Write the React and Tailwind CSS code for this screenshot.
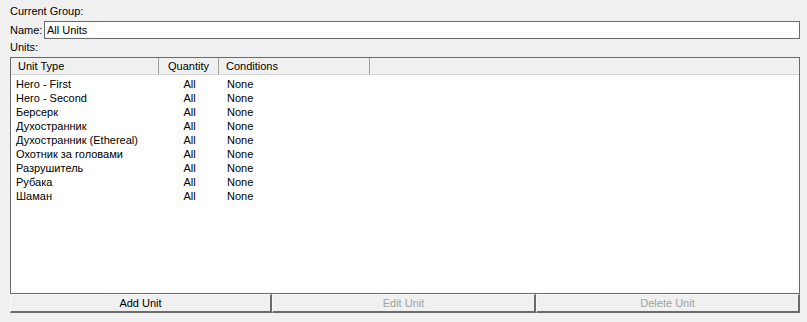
const units = [
  'Hero - First',
  'Hero - Second',
  'Берсерк',
  'Духостранник',
  'Духостранник (Ethereal)',
  'Охотник за головами',
  'Разрушитель',
  'Рубака',
  'Шаман',
];

export default function App() {
  return (
    <div className="w-[807px] h-[322px] bg-[#f0f0f0] text-black text-[11px] font-['Liberation_Sans',Arial,sans-serif] pl-[10px] pr-[7px] pt-[4px]">
      <div className="h-[14px] leading-[14px]">Current Group:</div>

      {/* Name row */}
      <div className="mt-[3px] h-[18px] flex items-center">
        <span className="w-[34px] leading-[14px]">Name:</span>
        <div className="flex-1 h-[18px] bg-white border border-[#6a6a6a] flex items-center px-[2px] leading-[14px]">
          All Units
        </div>
      </div>

      <div className="h-[15px] leading-[15px] mt-[1px]">Units:</div>

      {/* List view */}
      <div className="mt-[2px] h-[237px] bg-white border border-[#6a6a6a] flex flex-col">
        <div className="h-[17px] flex bg-[#f0f0f0] border-b border-[#d5d5d5] leading-[16px]">
          <div className="w-[148px] pl-[7px] border-r border-[#a0a0a0]">Unit Type</div>
          <div className="w-[60px] text-center border-r border-[#a0a0a0]">Quantity</div>
          <div className="w-[151px] pl-[7px] border-r border-[#a0a0a0]">Conditions</div>
          <div className="flex-1" />
        </div>
        <div className="pt-[2px]">
          {units.map((u) => (
            <div key={u} className="h-[14px] leading-[14px] flex">
              <div className="w-[148px] pl-[5px]">{u}</div>
              <div className="w-[61px] text-center">All</div>
              <div className="pl-[7px]">None</div>
            </div>
          ))}
        </div>
      </div>

      {/* Buttons */}
      <div className="flex h-[19px]">
        <button className="w-[262px] h-[19px] bg-[#f0f0f0] border-t border-l border-[#fafafa] border-r-2 border-b-2 border-r-[#6b6b6b] border-b-[#6b6b6b] leading-[15px] text-black">
          Add Unit
        </button>
        <button className="w-[264px] h-[19px] bg-[#f0f0f0] border-t border-l border-[#fafafa] border-r-2 border-b-2 border-r-[#6b6b6b] border-b-[#6b6b6b] leading-[15px] text-[#a0a0a0]">
          Edit Unit
        </button>
        <button className="flex-1 h-[19px] bg-[#f0f0f0] border-t border-l border-[#fafafa] border-r-2 border-b-2 border-r-[#6b6b6b] border-b-[#6b6b6b] leading-[15px] text-[#a0a0a0]">
          Delete Unit
        </button>
      </div>
    </div>
  );
}
